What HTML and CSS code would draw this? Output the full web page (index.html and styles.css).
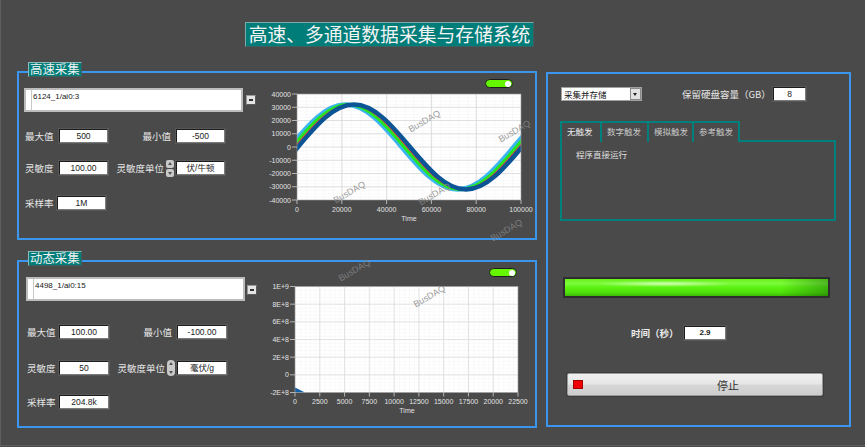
FILE: index.html
```html
<!DOCTYPE html>
<html lang="zh">
<head>
<meta charset="utf-8">
<title>高速、多通道数据采集与存储系统</title>
<link rel="stylesheet" href="styles.css">
</head>
<body>
<div class="app">
  <header class="header"><div class="title">高速、多通道数据采集与存储系统</div></header>
  <div class="main">
    <div class="left">
      <section class="panel panel-fast">
        <div class="legend">高速采集</div>
        <div class="controls">
          <div class="chan-row"><div class="chan-box">6124_1/ai0:3</div><div class="mini-drop"></div></div>
          <div class="form-row r1"><span class="lbl l1">最大值</span><span class="num">500</span><span class="lbl l2">最小值</span><span class="num">-500</span></div>
          <div class="form-row r2"><span class="lbl l1">灵敏度</span><span class="num">100.00</span><span class="lbl l2 l2s"><span>灵敏度单位</span><span class="spin"><i class="up"></i><i class="down"></i></span></span><span class="num">伏/牛顿</span></div>
          <div class="form-row r3"><span class="lbl l1 l1s">采样率</span><span class="num">1M</span></div>
        </div>
        <div class="chart-col">
          <div class="toggle-row"><span class="toggle"></span></div>
          <svg class="chart" width="268" height="135" viewBox="0 0 268 135">
            <defs>
              <pattern id="minor1" patternUnits="userSpaceOnUse" x="35" y="4" width="8.96" height="3.3125">
                <path d="M0 0V3.3125M0 0H8.96" stroke="#ececec" stroke-width="0.6" fill="none"/>
              </pattern>
              <clipPath id="clip1"><rect x="35" y="4" width="224" height="106"/></clipPath>
              <path id="sine" d="M-224 0 c18.26,-21.72 35.73,-42.4 56,-42.4 c20.27,0 37.74,20.68 56,42.4 c18.26,21.72 35.73,42.4 56,42.4 c20.27,0 37.74,-20.68 56,-42.4 c18.26,-21.72 35.73,-42.4 56,-42.4 c20.27,0 37.74,20.68 56,42.4 c18.26,21.72 35.73,42.4 56,42.4 c20.27,0 37.74,-20.68 56,-42.4 c18.26,-21.72 35.73,-42.4 56,-42.4 c20.27,0 37.74,20.68 56,42.4 c18.26,21.72 35.73,42.4 56,42.4 c20.27,0 37.74,-20.68 56,-42.4" fill="none"/>
            </defs>
            <rect x="35" y="4" width="224" height="106" fill="#fff"/>
            <rect x="35" y="4" width="224" height="106" fill="url(#minor1)"/>
            <g stroke="#d8d8d8" stroke-width="0.8">
              <line x1="79.8" y1="4" x2="79.8" y2="110"/><line x1="124.6" y1="4" x2="124.6" y2="110"/><line x1="169.4" y1="4" x2="169.4" y2="110"/><line x1="214.2" y1="4" x2="214.2" y2="110"/>
              <line x1="35" y1="17.25" x2="259" y2="17.25"/><line x1="35" y1="30.5" x2="259" y2="30.5"/><line x1="35" y1="43.75" x2="259" y2="43.75"/><line x1="35" y1="57" x2="259" y2="57"/><line x1="35" y1="70.25" x2="259" y2="70.25"/><line x1="35" y1="83.5" x2="259" y2="83.5"/><line x1="35" y1="96.75" x2="259" y2="96.75"/>
            </g>
            <g clip-path="url(#clip1)">
              <use href="#sine" transform="translate(27.5 57)" stroke="#3cb4f0" stroke-width="4.5"/>
              <use href="#sine" transform="translate(30.5 57)" stroke="#22e622" stroke-width="3.5"/>
              <use href="#sine" transform="translate(33 57)" stroke="#f23a3a" stroke-width="1.5"/>
              <use href="#sine" transform="translate(36 57)" stroke="#0b5496" stroke-width="4.5"/>
            </g>
            <rect x="35" y="4" width="224" height="106" fill="none" stroke="#9a9a9a" stroke-width="0.6"/>
            <g stroke="#cfcfcf" stroke-width="0.8">
              <line x1="30" y1="4" x2="35" y2="4"/><line x1="30" y1="17.25" x2="35" y2="17.25"/><line x1="30" y1="30.5" x2="35" y2="30.5"/><line x1="30" y1="43.75" x2="35" y2="43.75"/><line x1="30" y1="57" x2="35" y2="57"/><line x1="30" y1="70.25" x2="35" y2="70.25"/><line x1="30" y1="83.5" x2="35" y2="83.5"/><line x1="30" y1="96.75" x2="35" y2="96.75"/><line x1="30" y1="110" x2="35" y2="110"/>
              <line x1="35" y1="110" x2="35" y2="114"/><line x1="79.8" y1="110" x2="79.8" y2="114"/><line x1="124.6" y1="110" x2="124.6" y2="114"/><line x1="169.4" y1="110" x2="169.4" y2="114"/><line x1="214.2" y1="110" x2="214.2" y2="114"/><line x1="259" y1="110" x2="259" y2="114"/>
            </g>
            <g class="ticks ylab">
              <text x="29" y="6.5">40000</text><text x="29" y="19.75">30000</text><text x="29" y="33">20000</text><text x="29" y="46.25">10000</text><text x="29" y="59.5">0</text><text x="29" y="72.75">-10000</text><text x="29" y="86">-20000</text><text x="29" y="99.25">-30000</text><text x="29" y="112.5">-40000</text>
            </g>
            <g class="ticks xlab">
              <text x="35" y="121.5">0</text><text x="79.8" y="121.5">20000</text><text x="124.6" y="121.5">40000</text><text x="169.4" y="121.5">60000</text><text x="214.2" y="121.5">80000</text><text x="259" y="121.5">100000</text>
              <text x="147" y="131">Time</text>
            </g>
          </svg>
        </div>
      </section>
      <section class="panel panel-dyn">
        <div class="legend">动态采集</div>
        <div class="controls">
          <div class="chan-row"><div class="chan-box">4498_1/ai0:15</div><div class="mini-drop"></div></div>
          <div class="form-row r1"><span class="lbl l1">最大值</span><span class="num">100.00</span><span class="lbl l2">最小值</span><span class="num">-100.00</span></div>
          <div class="form-row r2"><span class="lbl l1">灵敏度</span><span class="num">50</span><span class="lbl l2 l2s"><span>灵敏度单位</span><span class="spin oval"><i class="up"></i><i class="down"></i></span></span><span class="num">毫伏/g</span></div>
          <div class="form-row r3"><span class="lbl l1">采样率</span><span class="num">204.8k</span></div>
        </div>
        <div class="chart-col">
          <div class="toggle-row"><span class="toggle"></span></div>
          <svg class="chart" width="268" height="141" viewBox="0 0 268 141">
            <defs>
              <pattern id="minor2" patternUnits="userSpaceOnUse" x="33" y="7.5" width="4.956" height="3.533">
                <path d="M0 0V3.533M0 0H4.956" stroke="#efefef" stroke-width="0.6" fill="none"/>
              </pattern>
            </defs>
            <rect x="33" y="7.5" width="223" height="106" fill="#fff"/>
            <rect x="33" y="7.5" width="223" height="106" fill="url(#minor2)"/>
            <g stroke="#dcdcdc" stroke-width="0.8">
              <line x1="57.78" y1="7.5" x2="57.78" y2="113.5"/><line x1="82.56" y1="7.5" x2="82.56" y2="113.5"/><line x1="107.33" y1="7.5" x2="107.33" y2="113.5"/><line x1="132.11" y1="7.5" x2="132.11" y2="113.5"/><line x1="156.89" y1="7.5" x2="156.89" y2="113.5"/><line x1="181.67" y1="7.5" x2="181.67" y2="113.5"/><line x1="206.44" y1="7.5" x2="206.44" y2="113.5"/><line x1="231.22" y1="7.5" x2="231.22" y2="113.5"/>
              <line x1="33" y1="25.17" x2="256" y2="25.17"/><line x1="33" y1="42.83" x2="256" y2="42.83"/><line x1="33" y1="60.5" x2="256" y2="60.5"/><line x1="33" y1="78.17" x2="256" y2="78.17"/><line x1="33" y1="95.83" x2="256" y2="95.83"/>
            </g>
            <polygon points="33,108.5 43,113.5 33,113.5" fill="#1261a8"/>
            <rect x="33" y="7.5" width="223" height="106" fill="none" stroke="#9a9a9a" stroke-width="0.6"/>
            <g stroke="#cfcfcf" stroke-width="0.8">
              <line x1="28" y1="7.5" x2="33" y2="7.5"/><line x1="28" y1="25.17" x2="33" y2="25.17"/><line x1="28" y1="42.83" x2="33" y2="42.83"/><line x1="28" y1="60.5" x2="33" y2="60.5"/><line x1="28" y1="78.17" x2="33" y2="78.17"/><line x1="28" y1="95.83" x2="33" y2="95.83"/><line x1="28" y1="113.5" x2="33" y2="113.5"/>
              <line x1="33" y1="113.5" x2="33" y2="117.5"/><line x1="57.78" y1="113.5" x2="57.78" y2="117.5"/><line x1="82.56" y1="113.5" x2="82.56" y2="117.5"/><line x1="107.33" y1="113.5" x2="107.33" y2="117.5"/><line x1="132.11" y1="113.5" x2="132.11" y2="117.5"/><line x1="156.89" y1="113.5" x2="156.89" y2="117.5"/><line x1="181.67" y1="113.5" x2="181.67" y2="117.5"/><line x1="206.44" y1="113.5" x2="206.44" y2="117.5"/><line x1="231.22" y1="113.5" x2="231.22" y2="117.5"/><line x1="256" y1="113.5" x2="256" y2="117.5"/>
            </g>
            <g class="ticks ylab">
              <text x="27" y="10">1E+9</text><text x="27" y="27.67">8E+8</text><text x="27" y="45.33">6E+8</text><text x="27" y="63">4E+8</text><text x="27" y="80.67">2E+8</text><text x="27" y="98.33">0</text><text x="27" y="116">-2E+8</text>
            </g>
            <g class="ticks xlab">
              <text x="33" y="124.5">0</text><text x="57.78" y="124.5">2500</text><text x="82.56" y="124.5">5000</text><text x="107.33" y="124.5">7500</text><text x="132.11" y="124.5">10000</text><text x="156.89" y="124.5">12500</text><text x="181.67" y="124.5">15000</text><text x="206.44" y="124.5">17500</text><text x="231.22" y="124.5">20000</text><text x="256" y="124.5">22500</text>
              <text x="145" y="133.5">Time</text>
            </g>
          </svg>
        </div>
      </section>
    </div>
    <section class="panel panel-right">
      <div class="rp-top">
        <div class="select"><span class="select-text">采集并存储</span><span class="select-btn"></span></div>
        <span class="lbl cap">保留硬盘容量（GB）</span>
        <span class="num cap-num">8</span>
      </div>
      <div class="tabs">
        <div class="tab-row">
          <div class="tab active">无触发</div>
          <div class="tab">数字触发</div>
          <div class="tab">模拟触发</div>
          <div class="tab last">参考触发</div>
          <div class="tab-fill"></div>
        </div>
        <div class="tab-panel">程序直接运行</div>
      </div>
      <div class="bar"></div>
      <div class="time-row"><span class="lbl time-lbl">时间（秒）</span><span class="num time-num">2.9</span></div>
      <div class="stop"><span class="stop-led"></span><span class="stop-text">停止</span></div>
    </section>
  </div>
  <span class="wm" style="left:406px;top:117px">BusDAQ</span>
  <span class="wm" style="left:496px;top:127px">BusDAQ</span>
  <span class="wm" style="left:331px;top:188px">BusDAQ</span>
  <span class="wm" style="left:416px;top:190px">BusDAQ</span>
  <span class="wm" style="left:488px;top:226px">BusDAQ</span>
  <span class="wm" style="left:336px;top:266px">BusDAQ</span>
  <span class="wm" style="left:411px;top:292px">BusDAQ</span>
</div>
</body>
</html>
```
FILE: styles.css
```css
body {
  margin: 0;
  background: #4a4a4a;
  font-family: "Noto Sans CJK SC", "Noto Sans", sans-serif;
}

.app {
  position: relative;
  width: 865px;
  height: 446px;
  box-sizing: border-box;
  border-left: 1px solid #5e5e5e;
  border-bottom: 1px solid #5e5e5e;
  overflow: hidden;
}

.header {
  height: 71px;
  box-sizing: border-box;
  padding: 22px 0 0 244px;
}

.title {
  width: 289px;
  height: 25px;
  box-sizing: border-box;
  background: #007d79;
  border: 1px solid #7fa9a7;
  border-right-color: #3d5f5d;
  border-bottom-color: #3d5f5d;
  color: #f4f4f4;
  font-size: 18.8px;
  line-height: 22px;
  text-align: center;
  white-space: nowrap;
}

.main {
  display: flex;
  padding-left: 16px;
  gap: 9px;
}

.left {
  display: flex;
  flex-direction: column;
  gap: 20px;
  width: 520px;
}

.panel {
  position: relative;
  box-sizing: border-box;
  border: 2px solid #3a96ef;
  display: flex;
}

.panel-fast { height: 169px; }
.panel-dyn { height: 168px; }

.legend {
  position: absolute;
  top: -11px;
  left: 9px;
  height: 15px;
  box-sizing: border-box;
  padding: 0 1px;
  background: #007d79;
  border: 1px solid #8fb8b6;
  border-right-color: #3d5f5d;
  border-bottom-color: #3d5f5d;
  color: #f2f2f2;
  font-size: 12.4px;
  line-height: 12px;
  white-space: nowrap;
}

.controls {
  width: 243px;
  box-sizing: border-box;
  padding-top: 15px;
  padding-left: 5px;
}

.panel-dyn .controls { padding-left: 7px; }

.chan-row {
  display: flex;
  align-items: flex-start;
  height: 24px;
}

.chan-box {
  position: relative;
  width: 219px;
  height: 24px;
  box-sizing: border-box;
  background: #fff;
  border: 2px solid #bcbcbc;
  padding: 2px 0 0 7px;
  font-family: "Liberation Sans", sans-serif;
  font-size: 8px;
  line-height: 10px;
  color: #202020;
}

.chan-box::before {
  content: "";
  position: absolute;
  left: 5px;
  top: 0;
  bottom: 0;
  width: 1px;
  background: #c8c8c8;
}

.mini-drop {
  position: relative;
  width: 10px;
  height: 10px;
  box-sizing: border-box;
  margin: 7px 0 0 3px;
  background: #e4e4e4;
  border: 1px solid #9a9a9a;
  border-right-color: #5a5a5a;
  border-bottom-color: #5a5a5a;
}

.panel-dyn .mini-drop { margin: 8px 0 0 2px; }

.mini-drop::after {
  content: "";
  position: absolute;
  left: 2px;
  top: 3px;
  width: 4px;
  height: 2px;
  background: #333;
}

.form-row {
  display: flex;
  align-items: center;
  height: 14px;
}

.panel-fast .r1 { margin-top: 17px; }
.panel-fast .r2 { margin-top: 18px; }
.panel-fast .r3 { margin-top: 21px; }
.panel-dyn .r1 { margin-top: 24px; }
.panel-dyn .r2 { margin-top: 22px; }
.panel-dyn .r3 { margin-top: 20px; }

.lbl {
  color: #e6e6e6;
  font-size: 9.5px;
  line-height: 12px;
  white-space: nowrap;
}

.l1 {
  width: 34px;
  margin-left: 1px;
}
.l1s { width: 32px; }
.panel-dyn .l1 { width: 32px; }

.l2 {
  width: 68px;
  box-sizing: border-box;
  display: flex;
  justify-content: flex-end;
  align-items: center;
  gap: 2px;
  padding-right: 5px;
}
.l2s { padding-right: 2px; }

.num {
  width: 49px;
  height: 14px;
  box-sizing: border-box;
  background: #fff;
  border: 1px solid #1c1c1c;
  border-right-color: #7a7a7a;
  border-bottom-color: #7a7a7a;
  box-shadow: 0 0 0 1px #575757;
  color: #222;
  font-family: "Liberation Sans", "Noto Sans CJK SC", sans-serif;
  font-size: 8.5px;
  line-height: 12px;
  text-align: center;
  white-space: nowrap;
}

.panel-dyn .num { width: 50px; }

.spin {
  display: flex;
  flex-direction: column;
  gap: 1px;
  width: 8px;
}

.spin i {
  display: block;
  position: relative;
  height: 8px;
  background: #c9c9c9;
  border-radius: 2px;
}

.spin i::after {
  content: "";
  position: absolute;
  left: 1.5px;
  border-left: 2.5px solid transparent;
  border-right: 2.5px solid transparent;
}

.spin .up::after {
  top: 2px;
  border-bottom: 3px solid #555;
}

.spin .down::after {
  top: 3px;
  border-top: 3px solid #555;
}

.spin.oval { gap: 0; }
.spin.oval .up { border-radius: 4px 4px 0 0; }
.spin.oval .down { border-radius: 0 0 4px 4px; }

.chart-col {
  width: 268px;
  display: flex;
  flex-direction: column;
}

.toggle-row {
  height: 17px;
  box-sizing: border-box;
  padding: 6px 17px 0 0;
  display: flex;
  justify-content: flex-end;
}

.panel-dyn .toggle-row { padding-right: 13px; }

.toggle {
  position: relative;
  width: 28px;
  height: 9px;
  box-sizing: border-box;
  border-radius: 5px;
  background: #66f500;
  border: 1px solid #1d1d1d;
}

.toggle::after {
  content: "";
  position: absolute;
  right: 1px;
  top: 0.5px;
  width: 6px;
  height: 6px;
  border-radius: 50%;
  background: #fff;
}

.chart {
  display: block;
  overflow: visible;
}

.ticks text {
  font-family: "Liberation Sans", sans-serif;
  font-size: 7px;
  fill: #e2e2e2;
}

.ylab text { text-anchor: end; }
.xlab text { text-anchor: middle; }

/* right panel */
.panel-right {
  flex-direction: column;
  margin-top: 1px;
  width: 305px;
  height: 355px;
}

.rp-top {
  display: flex;
  align-items: center;
  height: 14px;
  margin: 13px 0 0 13px;
}

.select {
  display: flex;
  width: 81px;
  height: 14px;
  box-sizing: border-box;
  background: #fff;
  border: 1px solid #a0a0a0;
}

.select-text {
  flex: 1;
  padding-left: 2px;
  color: #111;
  font-size: 8.5px;
  line-height: 12px;
  white-space: nowrap;
}

.select-btn {
  position: relative;
  width: 11px;
  box-sizing: border-box;
  background: #e2e2e2;
  border: 1px solid #8a8a8a;
}

.select-btn::after {
  content: "";
  position: absolute;
  left: 2px;
  top: 4px;
  border-left: 2.5px solid transparent;
  border-right: 2.5px solid transparent;
  border-top: 3px solid #222;
}

.cap {
  width: 86px;
  margin-left: 40px;
}

.cap-num {
  width: 33px;
  margin-left: 5px;
}

.tabs {
  width: 276px;
  margin: 20px 0 0 12px;
}

.tab-row {
  display: flex;
  height: 21px;
}

.tab {
  box-sizing: border-box;
  border-top: 2px solid #00807c;
  border-left: 2px solid #00807c;
  padding: 2px 0 0 5px;
  color: #c8c8c8;
  font-size: 8.5px;
  line-height: 12px;
  white-space: nowrap;
}

.tab:nth-child(1) { width: 40px; color: #ececec; }
.tab:nth-child(2) { width: 47px; }
.tab:nth-child(3) { width: 45px; }
.tab:nth-child(4) { width: 48px; border-right: 2px solid #00807c; }

.tab-fill {
  flex: 1;
  border-bottom: 2px solid #00807c;
}

.tab-panel {
  height: 79px;
  box-sizing: border-box;
  border: 2px solid #00807c;
  border-top: none;
  padding: 6px 0 0 14px;
  color: #e0e0e0;
  font-size: 8.5px;
  line-height: 12px;
}

.bar {
  width: 267px;
  height: 21px;
  box-sizing: border-box;
  margin: 56px 0 0 15px;
  border: 2px solid #2e2e2e;
  background:
    radial-gradient(ellipse 70px 3px at 38% 28%, rgba(225, 255, 200, 0.85), rgba(225, 255, 200, 0) 100%),
    linear-gradient(to right, rgba(0, 0, 0, 0) 82%, rgba(0, 60, 0, 0.35) 100%),
    linear-gradient(to bottom, #66f018 0%, #7dfb3c 25%, #5cf212 50%, #4fe00a 80%, #3cbc06 100%);
}

.time-row {
  display: flex;
  align-items: center;
  height: 14px;
  margin: 28px 0 0 83px;
}

.time-lbl {
  width: 53px;
  font-weight: bold;
  color: #ececec;
}

.time-num {
  width: 42px;
  font-weight: bold;
  font-size: 8px;
}

.stop {
  display: flex;
  align-items: center;
  width: 256px;
  height: 23px;
  box-sizing: border-box;
  margin: 33px 0 0 19px;
  padding-left: 5px;
  background: linear-gradient(to bottom, #f0f0f0 0%, #e6e6e6 45%, #d6d6d6 55%, #cdcdcd 100%);
  border: 1px solid #9a9a9a;
  border-radius: 2px;
  box-shadow: 0 0 0 1px #3d3d3d;
}

.stop-led {
  width: 10px;
  height: 9px;
  background: #f00000;
  border: 1px solid #a00000;
  box-sizing: border-box;
}

.stop-text {
  margin-left: 134px;
  color: #333;
  font-size: 11px;
  line-height: 14px;
}

.wm {
  position: absolute;
  width: 32px;
  height: 10px;
  font-family: "Liberation Sans", sans-serif;
  font-size: 9px;
  line-height: 10px;
  color: rgba(135, 135, 135, 0.85);
  transform: rotate(-30deg);
  white-space: nowrap;
  pointer-events: none;
}
```
